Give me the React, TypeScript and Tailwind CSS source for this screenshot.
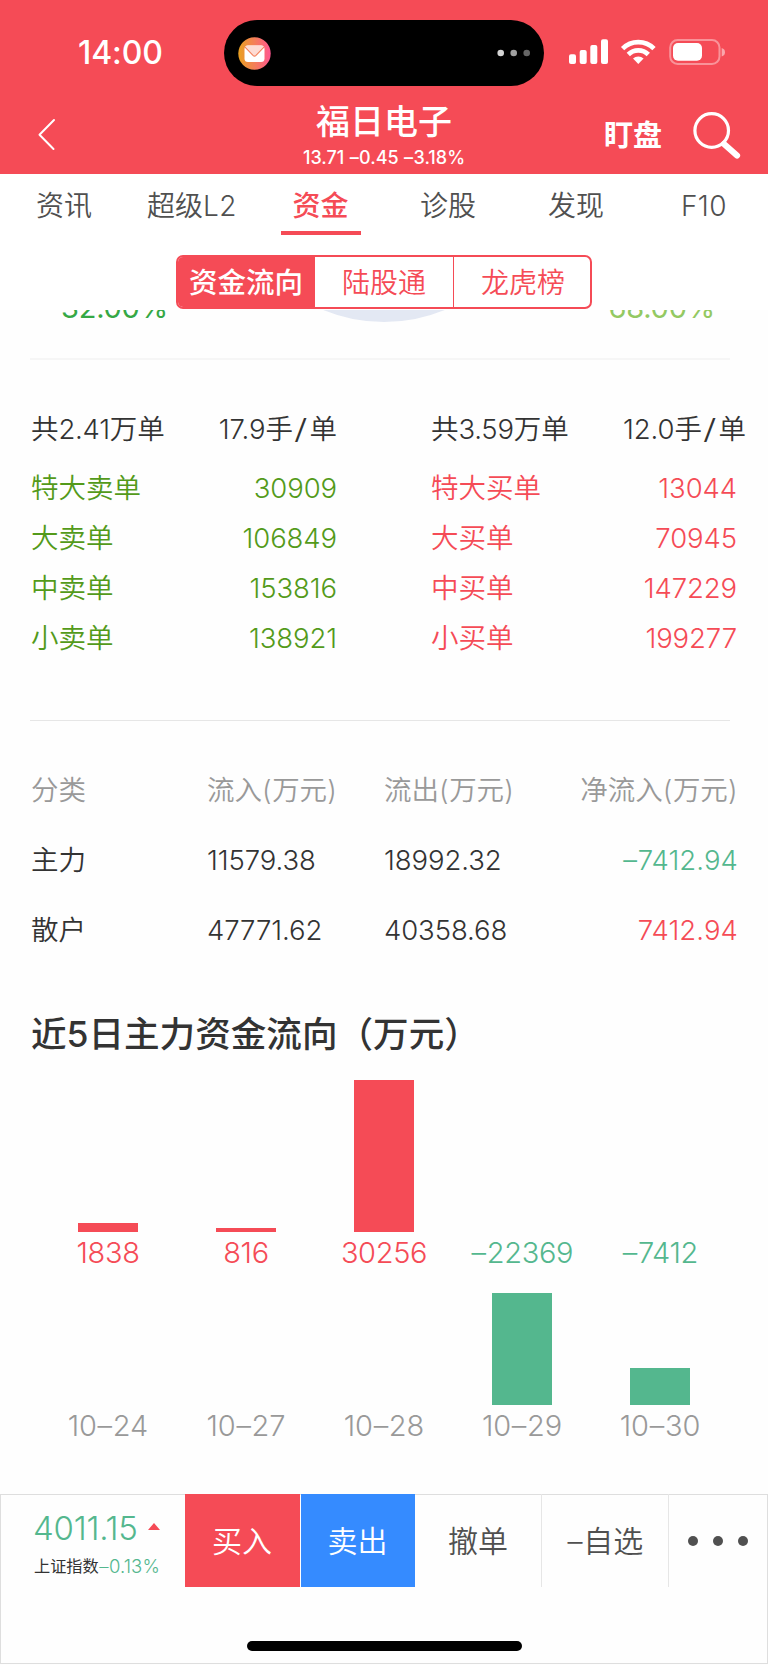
import React from "react";

/** Renders mixed text, setting the tracking of the Latin and digit runs only; slashes are drawn wider and dashes get room. */
function T({ children, tight = "tracking-[-0.003em]", className = "" }: { children: string; tight?: string; className?: string }) {
  const parts = children.split(/(\/|–|[\x20-\x2e\x30-\x7e]+)/).filter(Boolean);
  const style = (p: string) => {
    if (p === "/") return "mx-[3.500px] inline-block scale-x-140 font-light";
    if (p === "–") return "mx-[0.025em]";
    return /^[\x20-\x7e]/.test(p) ? tight : "";
  };
  return (
    <span className={`whitespace-pre ${className}`}>
      {parts.map((p, i) => (
        <span key={i} className={style(p)}>{p}</span>
      ))}
    </span>
  );
}

const tabs = ["资讯", "超级L2", "资金", "诊股", "发现", "F10"];

const sells = [["特大卖单", "30909"], ["大卖单", "106849"], ["中卖单", "153816"], ["小卖单", "138921"]];
const buys = [["特大买单", "13044"], ["大买单", "70945"], ["中买单", "147229"], ["小买单", "199277"]];

const days = [
  { date: "10–24", value: "1838", up: 9.3, down: 0 },
  { date: "10–27", value: "816", up: 4.3, down: 0 },
  { date: "10–28", value: "30256", up: 152, down: 0 },
  { date: "10–29", value: "–22369", up: 0, down: 112.3 },
  { date: "10–30", value: "–7412", up: 0, down: 37.3 },
];

function StatusBar() {
  return (
    <div className="flex h-[106px] pt-5">
      <div className="flex h-[66px] w-[224px] items-center pl-[78px] text-[32px] font-[550] leading-none">
        <T tight="tracking-[-0.003em]">14:00</T>
      </div>
      <div className="flex h-[66px] w-[320px] items-center justify-between rounded-full bg-black pl-[14px] pr-[14px]">
        <svg width="33" height="33" viewBox="0 0 33 33">
          <defs>
            <linearGradient id="mail" x1="0" x2="1" y1="0" y2="0">
              <stop offset="0" stopColor="#e9a020" />
              <stop offset="0.5" stopColor="#f47f58" />
              <stop offset="1" stopColor="#ff5590" />
            </linearGradient>
          </defs>
          <circle cx="16.5" cy="16.5" r="16.2" fill="url(#mail)" />
          <rect x="6.5" y="8.5" width="20" height="16.5" rx="3.5" fill="#fff" />
          <path d="M7.2 9.6Q8 8.5 10 8.5h13q2 0 2.8 1.1L18 18.2q-1.5 1.5-3 0Z" fill="#fddcd4" />
          <path d="M6.8 9.8l8.2 8.6q1.5 1.4 3 0l8.200-8.600" fill="none" stroke="#f47f58" strokeWidth="1.1" />
        </svg>
        <svg width="33" height="8" viewBox="0 0 33 8">
          <circle cx="3.700" cy="4" r="3.300" fill="#d4d4d4" />
          <circle cx="16.700" cy="4" r="3.300" fill="#a0a0a0" />
          <circle cx="29.700" cy="4" r="3.300" fill="#666" />
        </svg>
      </div>
      <svg className="ml-[25px] mt-[19px]" width="156" height="26" viewBox="0 0 156 26" fill="#fff">
        <rect x="0" y="15.300" width="7" height="9.700" rx="2" />
        <rect x="10.700" y="11" width="7" height="14" rx="2" />
        <rect x="21.300" y="6" width="7" height="19" rx="2" />
        <rect x="32" y="0.300" width="7" height="24.700" rx="2" />
        <g fill="none" stroke="#fff">
          <path d="M53.600 9.600a22.200 22.200 0 0 1 31.400 0" strokeWidth="4.700" />
          <path d="M59.300 15.500a14.200 14.200 0 0 1 20 0" strokeWidth="4.700" />
        </g>
        <path d="M69.300 25l-5.300-5.400a8 8 0 0 1 10.600 0Z" />
        <rect x="101.200" y="1" width="49.300" height="24" rx="7.500" fill="none" stroke="#fff" strokeOpacity="0.4" strokeWidth="2" />
        <rect x="104" y="4" width="29" height="17.700" rx="5" />
        <path d="M152.700 9v8.500q3.300-1 3.300-4.250T152.700 9Z" fillOpacity="0.5" />
      </svg>
    </div>
  );
}

function Header() {
  return (
    <div className="grid h-[68px] grid-cols-[224px_320px_1fr]">
      <svg className="ml-[36px] mt-[11px]" width="22" height="34" viewBox="0 0 22 34" fill="none" stroke="#fff" strokeWidth="2" strokeLinecap="round" strokeLinejoin="round">
        <path d="M18 3L3.500 17.700L17.500 32" />
      </svg>
      <div className="flex flex-col items-center">
        <div className="h-[32px] text-[34px] font-medium leading-[32px]">福日电子</div>
        <div className="mt-[9px] h-[22px] text-[18px] font-medium leading-[22px]"><T tight="tracking-[0.002em]">13.71 –0.45 –3.18%</T></div>
      </div>
      <div className="flex">
        <div className="ml-[60px] mt-[13px] text-[29px] font-bold leading-[34px]">盯盘</div>
        <svg className="ml-[29px] mt-[4px]" width="52" height="52" viewBox="0 0 52 52" fill="none" stroke="#fff" strokeLinecap="round">
          <circle cx="20.700" cy="20.500" r="16.800" strokeWidth="3.200" />
          <path d="M33 34L46 45.500" strokeWidth="6.200" />
        </svg>
      </div>
    </div>
  );
}

function OrderBlock({ total, avg, rows, color, avgShift }: { total: string; avg: string; rows: string[][]; color: string; avgShift: string }) {
  return (
    <div>
      <div className="mb-[4px] flex h-[60px] items-center justify-between text-[#333]">
        <T tight="tracking-[-0.01em]">{total}</T>
        <T className={avgShift}>{avg}</T>
      </div>
      <div className={color}>
        {rows.map(([name, n]) => (
          <div key={name} className="flex h-[50px] items-center justify-between"><T>{name}</T><T tight="tracking-[-0.003em]">{n}</T></div>
        ))}
      </div>
    </div>
  );
}

export default function App() {
  return (
    <div className="flex h-[1665px] w-[768px] flex-col overflow-hidden bg-[#fefefe] font-['Inter','Noto_Sans_CJK_SC',sans-serif] text-[27.5px] font-[350] leading-none text-[#333]">
      <header className="h-[174px] shrink-0 bg-[#f54b56] text-white">
        <StatusBar />
        <Header />
      </header>

      <nav className="grid h-[62px] shrink-0 grid-cols-6 bg-white text-[28px] text-[#505050]">
        {tabs.map((t) => (
          <div key={t} className={t === "资金" ? "flex flex-col items-center pl-px font-medium text-[#f54b56]" : "flex flex-col items-center"}>
            <div className="flex h-[57px] items-center pt-[7px]"><T tight="tracking-[0.015em]">{t}</T></div>
            {t === "资金" && <div className="h-1 w-20 bg-[#f54b56]" />}
          </div>
        ))}
      </nav>

      <div className="flex h-[74px] shrink-0 justify-center bg-white pt-[19px]">
        <div className="flex h-[54px] w-[416px] overflow-hidden rounded-[7px] border-2 border-[#f54b56] text-[28px] text-[#f54b56]">
          <div className="flex w-[137px] items-center justify-center bg-[#f54b56] pr-px pt-[2px] text-[28.500px] font-medium text-white">资金流向</div>
          <div className="flex w-[139px] items-center justify-center border-r border-[#f54b56] pt-[2px]">陆股通</div>
          <div className="flex flex-1 items-center justify-center pl-[2px] pt-[2px]">龙虎榜</div>
        </div>
      </div>

      <div className="flex h-[48px] shrink-0 items-start justify-between overflow-hidden pl-[61px] pr-[53px] text-[29px] font-normal">
        <div className="-mt-[17px] h-[29px] text-[#35a845]"><T tight="tracking-[-0.008em]">32.00%</T></div>
        <svg className="-ml-[9px]" width="130" height="13" viewBox="0 0 130 13"><circle cx="65" cy="-148" r="160" fill="#e3e8f3" /></svg>
        <div className="-mt-[17px] h-[29px] text-[#93c962]"><T tight="tracking-[-0.008em]">68.00%</T></div>
      </div>
      <div className="ml-[30px] mr-[38px] h-[2px] shrink-0 bg-[#f6f6f6]" />

      <section className="grid h-[360px] shrink-0 grid-cols-[306px_306px] gap-x-[94px] pl-[31px] pt-[40px]">
        <OrderBlock total="共2.41万单" avg="17.9手/单" rows={sells} color="text-[#539a1a]" avgShift="" />
        <OrderBlock total="共3.59万单" avg="12.0手/单" rows={buys} color="text-[#f54b56]" avgShift="-mr-[9px]" />
      </section>
      <div className="ml-[30px] mr-[38px] h-px shrink-0 bg-[#e6e6e6]" />

      <section className="grid h-[245px] shrink-0 auto-rows-[70px] grid-cols-[176px_177px_1fr_auto] items-center pl-[31px] pr-[30px] pt-[35px]">
        <div className="text-[#999]">分类</div>
        <div className="text-[#999]"><T tight="tracking-[0.02em]">流入(万元)</T></div>
        <div className="text-[#999]"><T tight="tracking-[0.02em]">流出(万元)</T></div>
        <div className="text-right text-[#999]"><T tight="tracking-[0.02em]">净流入(万元)</T></div>
        <div>主力</div>
        <T>11579.38</T>
        <T>18992.32</T>
        <T className="text-right text-[#54b78e]" tight="tracking-[0.003em]">–7412.94</T>
        <div>散户</div>
        <T>47771.62</T>
        <T>40358.68</T>
        <T className="text-right text-[#f54b56]" tight="tracking-[0.003em]">7412.94</T>
      </section>

      <h2 className="h-[114px] shrink-0 pl-[31px] pt-[51px] text-[35.600px] font-medium leading-[36px]"><T>近5日主力资金流向（万元）</T></h2>

      <section className="grid h-[414px] shrink-0 grid-cols-5 px-[39px]">
        {days.map((d) => (
          <div key={d.date} className="flex flex-col items-center">
            <div className="flex h-[152px] items-end">
              <div className="w-[60px] bg-[#f54b56]" style={{ height: d.up }} />
            </div>
            <div className={d.up ? "flex h-[40px] items-center text-[29px] text-[#f54b56]" : "flex h-[40px] items-center text-[29px] text-[#54b78e]"}>
              <T tight="tracking-[-0.012em]">{d.value}</T>
            </div>
            <div className="flex h-[133px] items-end">
              <div className="w-[60px] bg-[#54b78e]" style={{ height: d.down }} />
            </div>
            <div className="flex h-[40px] items-center text-[29px] text-[#999]"><T>{d.date}</T></div>
          </div>
        ))}
      </section>

      <footer className="flex h-[170px] shrink-0 flex-col items-center border border-[#dedede]">
        <div className="-mt-px flex h-[93px] w-full text-[30px] text-[#505050]">
          <div className="w-[184px] pl-[32px] pt-[16px]">
            <div className="flex h-[36px] items-center text-[33px] text-[#54b78e]">
              <T tight="tracking-[-0.006em]">4011.15</T>
              <svg className="ml-[10px]" width="12" height="20" viewBox="0 0 12 20"><path d="M0 12L6 5L12 12Z" fill="#f54b56" /></svg>
            </div>
            <div className="mt-[8px] flex h-[24px] items-center pl-px text-[16.200px] font-normal text-[#333]">
              上证指数<T className="text-[18.500px] font-[350] text-[#54b78e]" tight="tracking-[0.006em]">–0.13%</T>
            </div>
          </div>
          <div className="flex w-[115px] items-center justify-center bg-[#f54b56] pr-px text-white">买入</div>
          <div className="ml-px flex w-[114px] items-center justify-center bg-[#358bff] pr-px text-white">卖出</div>
          <div className="flex w-[127px] items-center justify-center border-r border-[#e6e6e6]">撤单</div>
          <div className="flex w-[127px] items-center justify-center border-r border-[#e6e6e6]"><T>–自选</T></div>
          <div className="flex flex-1 items-center justify-center gap-[15px]">
            <i className="size-[10px] rounded-full bg-[#505050]" />
            <i className="size-[10px] rounded-full bg-[#505050]" />
            <i className="size-[10px] rounded-full bg-[#505050]" />
          </div>
        </div>
        <div className="mt-[54px] h-[10px] w-[275px] rounded-full bg-black" />
      </footer>
    </div>
  );
}
